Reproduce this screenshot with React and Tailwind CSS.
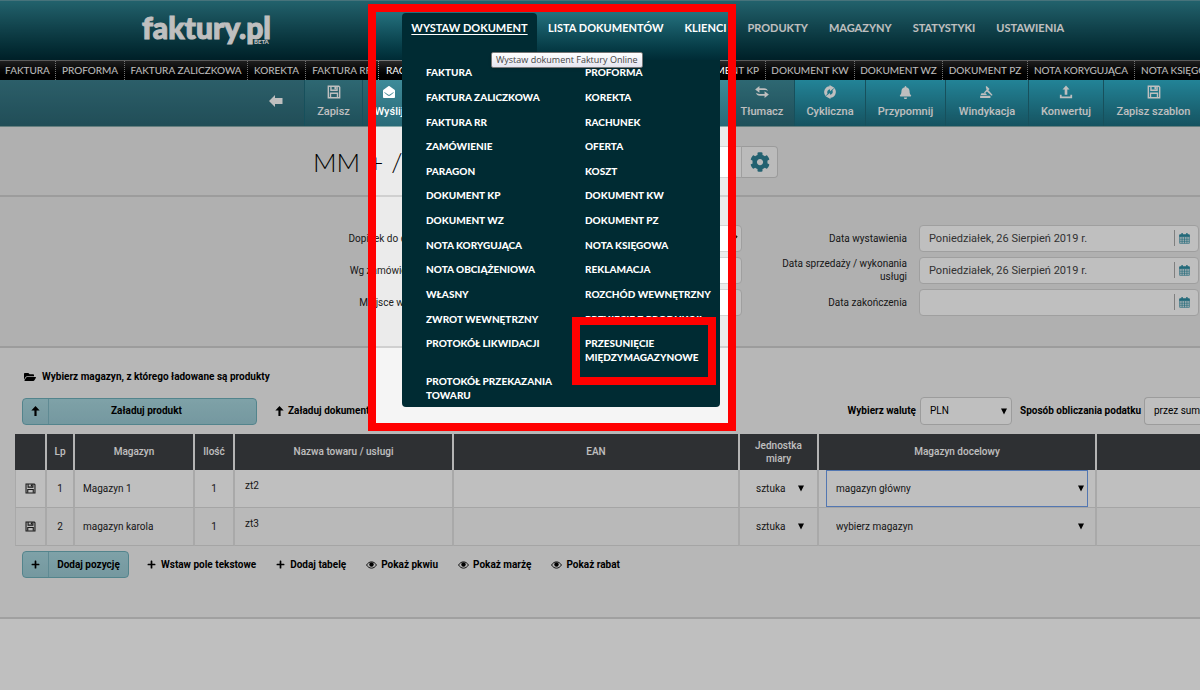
import { FaEnvelopeOpen, FaBell, FaCog, FaFolderOpen, FaPlus } from 'react-icons/fa';

const NAV = ['LISTA DOKUMENTÓW', 'KLIENCI', 'PRODUKTY', 'MAGAZYNY', 'STATYSTYKI', 'USTAWIENIA'];

const MENU = [
  ['FAKTURA', 'PROFORMA'],
  ['FAKTURA ZALICZKOWA', 'KOREKTA'],
  ['FAKTURA RR', 'RACHUNEK'],
  ['ZAMÓWIENIE', 'OFERTA'],
  ['PARAGON', 'KOSZT'],
  ['DOKUMENT KP', 'DOKUMENT KW'],
  ['DOKUMENT WZ', 'DOKUMENT PZ'],
  ['NOTA KORYGUJĄCA', 'NOTA KSIĘGOWA'],
  ['NOTA OBCIĄŻENIOWA', 'REKLAMACJA'],
  ['WŁASNY', 'ROZCHÓD WEWNĘTRZNY'],
  ['ZWROT WEWNĘTRZNY', 'PRZYJĘCIE Z PRODUKCJI'],
];

const TABS = [
  ['FAKTURA', 'w-14 justify-center'],
  ['PROFORMA', 'w-[69px] justify-center'],
  ['FAKTURA ZALICZKOWA', 'w-[123px] justify-center'],
  ['KOREKTA', 'w-[58px] justify-center'],
  ['FAKTURA RR', 'w-[73px] justify-center'],
  ['RACHUNEK', 'w-[301px] pl-[7px]'],
  ['DOKUMENT KP', 'w-[86px] justify-center'],
  ['DOKUMENT KW', 'w-[89px] justify-center'],
  ['DOKUMENT WZ', 'w-[88px] justify-center'],
  ['DOKUMENT PZ', 'w-[85px] justify-center'],
  ['NOTA KORYGUJĄCA', 'w-[107px] justify-center'],
  ['NOTA KSIĘGOWA', 'w-[100px] pl-1.5'],
];

function Calendar() {
  return (
    <svg viewBox="0 0 16 16" className="size-[11px] text-[#2e8ea3]" fill="none" stroke="currentColor">
      <path d="M1 3h14v12H1z" fill="#e8f3f5" />
      <path d="M1 2.500h14v3H1z" fill="currentColor" />
      <path d="M4.500 0v4M11.500 0v4" strokeWidth="2" />
      <path d="M1 9h14M1 12h14M4.500 6v9M8 6v9M11.500 6v9" />
    </svg>
  );
}

function Floppy({ className }) {
  return (
    <svg viewBox="0 0 16 16" className={className} fill="none" stroke="currentColor" strokeWidth="1.600">
      <path d="M1.500 1.500h12l1 1v12h-13z" />
      <path d="M4.500 1.500v4.500h7V1.500M4 14V9.500h8V14" />
      <path d="M9.500 2v3" strokeWidth="2" />
    </svg>
  );
}

function Swap() {
  return (
    <svg viewBox="0 0 16 14" className="h-3 w-3.5" fill="currentColor">
      <path d="M0 4l5-4v2.500h5.500c2.500 0 4 1.300 4.500 3.500-1-1-2.300-1.200-4-1.200H5V8z" />
      <path d="M16 10l-5 4v-2.500H5.500C3 11.500 1.500 10.200 1 8c1 1 2.300 1.200 4 1.200h6V6z" />
    </svg>
  );
}

function Cycle() {
  return (
    <svg viewBox="0 0 16 16" className="size-3.5" fill="currentColor">
      <path d="M3 12.500A6.800 6.800 0 0 1 7.500 1.300V0L13 3.200 8 7V4.800A3.400 3.400 0 0 0 5.200 9.800z" />
      <path d="M13 3.500A6.800 6.800 0 0 1 8.500 14.700V16L3 12.800 8 9v2.200A3.400 3.400 0 0 0 10.800 6.200z" />
    </svg>
  );
}

function Gavel() {
  return (
    <svg viewBox="0 0 16 14" className="h-3 w-3.5" fill="currentColor">
      <path d="M7.500 0L11 3.500 9.500 5 11 6.500l3.500 4-1 1-4-3.500L8 6.500 5.500 8.500 4.500 7.500 7.500 4.500 6.500 1z" />
      <path d="M1.500 8.500h5l1.500 2H0.500zM0 11.500h12V14H0z" />
    </svg>
  );
}

function Export() {
  return (
    <svg viewBox="0 0 16 16" className="size-3.5" fill="currentColor">
      <path d="M8 0.500l4 4.500H9.500v6h-3V5H4z" />
      <path d="M1 11h2v2h10v-2h2v4H1z" />
    </svg>
  );
}

function Up() {
  return (
    <svg viewBox="0 0 10 12" className="h-2.5 w-[9px]" fill="currentColor">
      <path d="M5 0l5 5.500H6.300V12H3.700V5.500H0z" />
    </svg>
  );
}

function Eye() {
  return (
    <svg viewBox="0 0 16 11" className="h-2 w-[11px]" fill="none" stroke="currentColor" strokeWidth="1.300">
      <path d="M0.800 5.500C4.500-0.600 11.500-0.600 15.200 5.500 11.500 11.600 4.500 11.600 0.800 5.500z" />
      <circle cx="8" cy="4.800" r="3.200" fill="currentColor" stroke="none" />
    </svg>
  );
}

function Tool({ icon, label, className }) {
  return (
    <button
      type="button"
      className={`flex h-full shrink-0 flex-col items-center gap-1 border-l border-[#1f6b7b] pt-1 text-[11px] leading-4 font-medium ${className}`}
    >
      <span className="flex h-4 items-center">{icon}</span>
      <span className="whitespace-nowrap">{label}</span>
    </button>
  );
}

const MUTED = 'bg-linear-to-b from-[#3e8b99] to-[#296a78]';
const VIVID = 'bg-linear-to-b from-[#2fb0ca] to-[#1d6f81]';

function TextRow({ id, label, arrow }) {
  return (
    <div className="flex h-8 items-center">
      <label htmlFor={id} className="w-[463px] pr-3 text-right text-[10px] leading-[13px]">
        {label}
      </label>
      {arrow ? (
        <select
          id={id}
          className="h-[27px] min-w-0 flex-1 rounded-sm border border-[#d4d4d4] bg-white px-2 text-[10px]"
        />
      ) : (
        <input id={id} className="h-[27px] min-w-0 flex-1 rounded-sm border border-[#d4d4d4] bg-white px-2 text-[10px]" />
      )}
    </div>
  );
}

function DateRow({ id, label, value }) {
  return (
    <div className="flex h-8 items-center">
      <label htmlFor={id} className="w-[165px] pr-3 pl-4 text-right text-[10px] leading-[13px]">
        {label}
      </label>
      <div className="flex h-[27px] flex-1 items-center rounded-sm border border-[#d4d4d4] bg-white pr-2">
        <input
          id={id}
          defaultValue={value}
          className="h-full min-w-0 flex-1 bg-transparent pl-[9px] text-[11px] text-[#444]"
        />
        <span className="flex h-4 items-center border-l border-[#aaa] pl-1">
          <Calendar />
        </span>
      </div>
    </div>
  );
}

function Pick({ id, label, value, className, wrap = '', arrow = 'right-1' }) {
  return (
    <span className={`relative flex items-center ${wrap}`}>
      <select id={id} aria-label={label} className={`w-full appearance-none ${className}`}>
        <option>{value}</option>
      </select>
      <svg viewBox="0 0 6 7" className={`pointer-events-none absolute h-[7px] w-1.5 ${arrow}`}>
        <path d="M0 0.500h6L3 6.500z" />
      </svg>
    </span>
  );
}

const CELL = 'border-r-2 border-b border-r-[#e2e2e2] border-b-[#dcdcdc]';

function ItemRow({ n, store, name, target, focused }) {
  return (
    <tr className={`h-[38px] ${focused ? 'bg-white' : 'bg-[#f7f7f7]'}`}>
      <td className={`${CELL} border-l border-l-[#e2e2e2]`}>
        <button type="button" aria-label="Zapisz pozycję" className="flex w-full justify-center">
          <Floppy className="size-[11px]" />
        </button>
      </td>
      <td className={`${CELL} text-center`}>{n}</td>
      <td className={`${CELL} px-2`}>{store}</td>
      <td className={`${CELL} text-center`}>1</td>
      <td className={`${CELL} px-2.5 pt-2.5 align-top`}>{name}</td>
      <td className={CELL} />
      <td className={CELL}>
        <Pick label="Jednostka miary" value="sztuka" className="h-6 bg-transparent pl-4" arrow="right-[13px]" />
      </td>
      <td className={`${CELL} px-[7px]`}>
        <Pick
          label="Magazyn docelowy"
          value={target}
          className={`h-[37px] border bg-transparent pl-[9px] ${focused ? 'border-[#6f9fee]' : 'border-transparent'}`}
        />
      </td>
      <td className={CELL} />
    </tr>
  );
}

function TextButton({ icon, children }) {
  return (
    <button type="button" className="flex items-center gap-1 whitespace-nowrap">
      {icon}
      {children}
    </button>
  );
}

const BTN = 'flex items-center rounded-sm border border-[#6fb0bb] bg-linear-to-b from-[#a9d8e0] to-[#9ccbd5]';

export default function App() {
  return (
    <div className="relative flex min-h-screen flex-col overflow-hidden bg-white font-['Roboto',sans-serif] text-[10px] leading-3 text-[#222]">
      <header className="flex h-[60px] shrink-0 border-t border-[#5f9aa4] bg-linear-to-b from-[#2e8391] to-[#002b35] font-['Lato',sans-serif] text-white">
        <a href="#start" className="relative ml-[142px] w-[260px] shrink-0 pt-2 text-[30px] leading-9 font-black [-webkit-text-stroke:1px_white]">
          faktury.pl
          <span className="absolute top-[37px] left-[112px] text-[6px] leading-[7px] [-webkit-text-stroke:0]">BETA</span>
        </a>
        <nav className="flex pt-3 text-[11px] leading-[30px] font-bold whitespace-nowrap">
          <div className="relative">
            <a href="#wystaw" className="block h-[47px] w-[135px] rounded-t-[4px] bg-[#002b33] text-center underline underline-offset-2">
              WYSTAW DOKUMENT
            </a>
            <div className="absolute top-[47px] left-0 z-10 w-[318px] rounded-b-[4px] bg-[#002b33] pb-[5px] text-[10px] leading-[14px] font-black">
              <div className="grid h-[271px] auto-rows-fr items-center">
                {MENU.map(([a, b]) => (
                  <div key={a} className="flex">
                    <a href="#dok" className="w-[183px] pl-6">{a}</a>
                    <a href="#dok" className="flex-1">{b}</a>
                  </div>
                ))}
              </div>
              <div className="flex flex-col gap-2.5 pt-[5px] whitespace-normal">
                <div className="flex">
                  <a href="#dok" className="w-[183px] pl-6">PROTOKÓŁ LIKWIDACJI</a>
                  <a href="#dok" className="w-[120px]">PRZESUNIĘCIE MIĘDZYMAGAZYNOWE</a>
                </div>
                <a href="#dok" className="w-[160px] pl-6">PROTOKÓŁ PRZEKAZANIA TOWARU</a>
              </div>
              <div className="absolute top-[257px] left-[170px] h-[68px] w-36 border-8 border-[#ff0000]" />
            </div>
            <div role="tooltip" className="absolute top-[39px] left-[89px] z-20 rounded-[2px] border border-[#777] bg-linear-to-b from-white to-[#e5e5f0] px-1 font-['Open_Sans',sans-serif] text-[9px] leading-[14px] font-normal text-[#444] shadow-sm">
              Wystaw dokument Faktury Online
            </div>
          </div>
          {NAV.map((t) => (
            <a key={t} href="#menu" className="ml-[11px] pr-2.5">{t}</a>
          ))}
        </nav>
      </header>

      <nav className="flex h-5 shrink-0 overflow-hidden border-t border-[#777] bg-linear-to-b from-[#2a2a2a] to-black font-['Lato',sans-serif] text-white">
        {TABS.map(([t, w]) => (
          <a key={t} href="#tab" className={`flex h-full shrink-0 items-center border-r border-dotted border-[#999] pb-0.5 whitespace-nowrap ${w}`}>
            {t}
          </a>
        ))}
      </nav>

      <div className="flex h-[47px] shrink-0 overflow-hidden border-b border-[#8aa] bg-linear-to-b from-[#3b7f8d] to-[#2c6875] text-white">
        <button type="button" aria-label="Wstecz" className="flex w-[304px] shrink-0 items-center justify-end pr-[21px] pb-1">
          <svg viewBox="0 0 14 12" className="h-3 w-3.5" fill="currentColor">
            <path d="M0 6l6-6v3h7.500v6H6v3z" />
          </svg>
        </button>
        <Tool className={`w-[58px] ${MUTED}`} icon={<Floppy className="size-3.5" />} label="Zapisz" />
        <Tool className={`w-[53px] ${MUTED}`} icon={<FaEnvelopeOpen className="size-3" />} label="Wyślij" />
        <div className={`w-[314px] shrink-0 border-l border-[#1f6b7b] ${MUTED}`} />
        <Tool className={`w-[65px] border-transparent ${MUTED}`} icon={<Swap />} label="Tłumacz" />
        <Tool className={`w-[71px] ${VIVID}`} icon={<Cycle />} label="Cykliczna" />
        <Tool className={`w-20 ${VIVID}`} icon={<FaBell className="size-[13px]" />} label="Przypomnij" />
        <Tool className={`w-[83px] ${VIVID}`} icon={<Gavel />} label="Windykacja" />
        <Tool className={`w-[75px] ${VIVID}`} icon={<Export />} label="Konwertuj" />
        <Tool className={`min-w-[100px] flex-1 ${VIVID}`} icon={<Floppy className="size-3.5" />} label="Zapisz szablon" />
      </div>

      <section className="flex h-[70px] shrink-0 items-center border-b-2 border-[#d0d0d0] bg-[#ebebeb] pt-0.5 pl-[313px]">
        <h1 className="flex w-[120px] gap-2 font-['Lato',sans-serif] text-[26px] leading-8 font-light text-black">
          <span>MM</span>
          <span>+</span>
          <span>/</span>
        </h1>
        <input aria-label="Numer dokumentu" className="h-8 w-[309px] border border-[#d4d4d4] bg-white px-2" />
        <button type="button" aria-label="Ustawienia numeracji" className="flex h-8 w-9 items-center justify-center rounded-r-sm border border-l-0 border-[#cfcfcf] bg-[#fafafa]">
          <FaCog className="size-5 text-[#2f8296]" />
        </button>
      </section>

      <section className="flex h-[151px] shrink-0 border-b-2 border-[#d0d0d0] bg-[#ebebeb] pt-[25px]">
        <div className="w-[742px]">
          <TextRow id="dopisek" label="Dopisek do dokumentu" arrow />
          <TextRow id="zamowienie" label="Wg zamówienia numer" />
          <TextRow id="miejsce" label="Miejsce wystawienia" />
        </div>
        <div className="flex-1 pr-px pl-3">
          <DateRow id="wyst" label="Data wystawienia" value="Poniedziałek, 26 Sierpień 2019 r." />
          <DateRow id="sprz" label="Data sprzedaży / wykonania usługi" value="Poniedziałek, 26 Sierpień 2019 r." />
          <DateRow id="zak" label="Data zakończenia" value="" />
        </div>
      </section>

      <section className="h-[271px] shrink-0 border-b-2 border-[#d6d6d6] bg-[#f5f5f5] pt-[23px]">
        <h2 className="flex items-center gap-1.5 pl-6 font-bold text-black">
          <FaFolderOpen className="size-3" />
          Wybierz magazyn, z którego ładowane są produkty
        </h2>
        <div className="mt-3.5 flex h-7 items-center overflow-hidden pl-[22px] font-bold text-black">
          <button type="button" className={`${BTN} h-[27px] w-[235px]`}>
            <span className="flex h-full w-[26px] items-center justify-center border-r border-[#7fb9c4]">
              <Up />
            </span>
            <span className="flex-1 pr-3">Załaduj produkt</span>
          </button>
          <div className="ml-[18px]">
            <TextButton icon={<Up />}>Załaduj dokument</TextButton>
          </div>
          <div className="ml-auto flex shrink-0 items-center">
            <label htmlFor="waluta">Wybierz walutę</label>
            <Pick
              id="waluta"
              value="PLN"
              wrap="mr-2 ml-1 w-[92px]"
              className="h-7 rounded-sm border border-[#d0d0d0] bg-white pl-[9px] font-normal"
              arrow="right-[5px]"
            />
            <label htmlFor="podatek" className="w-[120px] whitespace-nowrap">Sposób obliczania podatku</label>
            <select id="podatek" className="ml-1 h-7 w-14 appearance-none rounded-l-sm border border-r-0 border-[#d0d0d0] bg-white pl-[9px] font-normal">
              <option>przez sumowanie</option>
            </select>
          </div>
        </div>

        <table className="mt-[9px] ml-[15px] w-full table-fixed border-separate border-spacing-0 text-[#222]">
          <thead>
            <tr className="h-9 bg-[#3e4045] text-white [&>th]:border-r-2 [&>th]:border-[#f0f0f0] [&>th]:font-medium">
              <th className="w-8" />
              <th className="w-7">Lp</th>
              <th className="w-[120px]">Magazyn</th>
              <th className="w-10">Ilość</th>
              <th className="w-[219px]">Nazwa towaru / usługi</th>
              <th className="w-[286px]">EAN</th>
              <th className="w-[79px] px-3 leading-[13px]">Jednostka miary</th>
              <th className="w-[278px]">Magazyn docelowy</th>
              <th />
            </tr>
          </thead>
          <tbody>
            <ItemRow n="1" store="Magazyn 1" name="zt2" target="magazyn główny" focused />
            <ItemRow n="2" store="magazyn karola" name="zt3" target="wybierz magazyn" />
          </tbody>
        </table>

        <div className="mt-[5px] flex items-center pl-[22px] font-bold text-black">
          <button type="button" className={`${BTN} h-[27px] w-[107px]`}>
            <span className="flex h-full w-[26px] items-center justify-center border-r border-[#7fb9c4]">
              <FaPlus className="size-[9px]" />
            </span>
            <span className="flex-1 whitespace-nowrap">Dodaj pozycję</span>
          </button>
          <div className="ml-[18px] flex gap-5">
            <TextButton icon={<FaPlus className="mr-px size-[9px]" />}>Wstaw pole tekstowe</TextButton>
            <TextButton icon={<FaPlus className="mr-px size-[9px]" />}>Dodaj tabelę</TextButton>
            <TextButton icon={<Eye />}>Pokaż pkwiu</TextButton>
            <TextButton icon={<Eye />}>Pokaż marżę</TextButton>
            <TextButton icon={<Eye />}>Pokaż rabat</TextButton>
          </div>
        </div>
      </section>

      <div className="pointer-events-none absolute top-1 left-[368px] z-30 h-[427px] w-[368px] border-8 border-[#ff0000] shadow-[0_0_0_2000px_rgba(0,0,0,0.25)]" />
    </div>
  );
}
